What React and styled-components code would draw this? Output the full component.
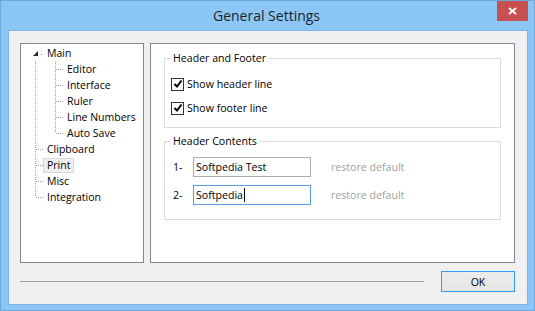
import React from "react";
import styled, { createGlobalStyle } from "styled-components";

const GlobalStyle = createGlobalStyle`
  html, body {
    margin: 0;
    padding: 0;
    background: #fff;
  }
  * {
    box-sizing: border-box;
  }
  body {
    font-family: "Open Sans", "Noto Sans", sans-serif;
    font-size: 10.5px;
    color: #000;
  }
`;

const tree = [
  {
    label: "Main",
    open: true,
    children: ["Editor", "Interface", "Ruler", "Line Numbers", "Auto Save"],
  },
  { label: "Clipboard" },
  { label: "Print", selected: true },
  { label: "Misc" },
  { label: "Integration" },
];

const Check = () => (
  <CheckBox>
    <svg width="10" height="10" viewBox="0 0 10 10">
      <path d="M1.5 5 L4 7.5 L8.5 1.5" stroke="#000" strokeWidth="2" fill="none" />
    </svg>
  </CheckBox>
);

export default function App() {
  return (
    <>
      <GlobalStyle />
      <Window>
        <TitleBar>
          <span />
          <Title>General Settings</Title>
          <CloseButton>
            <svg width="9" height="8" viewBox="0 0 9 8">
              <path d="M1 1 L8 7 M8 1 L1 7" stroke="#fff" strokeWidth="2" />
            </svg>
          </CloseButton>
        </TitleBar>

        <Content>
          <Main>
            <TreeBox>
              {tree.map((item, i) => {
                const lastTop = i === tree.length - 1;
                return (
                  <React.Fragment key={item.label}>
                    <TreeRow>
                      {item.open ? (
                        <Expander>
                          <svg width="13" height="16" viewBox="0 0 13 16">
                            <path d="M8 6 L8 11 L3 11 Z" fill="#262626" />
                            <rect x="11" y="9" width="1" height="1" fill="#8c8c8c" />
                          </svg>
                        </Expander>
                      ) : (
                        <Guide $w={13} $vert={lastTop ? "half" : "full"} $horiz />
                      )}
                      <Label $selected={item.selected}>{item.label}</Label>
                    </TreeRow>
                    {item.children &&
                      item.children.map((child, j) => (
                        <TreeRow key={child}>
                          <Guide $w={20} $vert="full" />
                          <Guide
                            $w={13}
                            $vert={j === item.children.length - 1 ? "half" : "full"}
                            $horiz
                          />
                          <Label>{child}</Label>
                        </TreeRow>
                      ))}
                  </React.Fragment>
                );
              })}
            </TreeBox>

            <Panel>
              <Group>
                <Legend>Header and Footer</Legend>
                <CheckList>
                  <CheckRow>
                    <Check />
                    Show header line
                  </CheckRow>
                  <CheckRow>
                    <Check />
                    Show footer line
                  </CheckRow>
                </CheckList>
              </Group>

              <Group $second>
                <Legend>Header Contents</Legend>
                <FieldList>
                  <FieldRow>
                    <Num>1-</Num>
                    <TextBox>Softpedia Test</TextBox>
                    <Restore>restore default</Restore>
                  </FieldRow>
                  <FieldRow>
                    <Num>2-</Num>
                    <TextBox $focused>
                      Softpedia<Caret />
                    </TextBox>
                    <Restore>restore default</Restore>
                  </FieldRow>
                </FieldList>
              </Group>
            </Panel>
          </Main>

          <Footer>
            <Separator />
            <OkButton>OK</OkButton>
          </Footer>
        </Content>
      </Window>
    </>
  );
}

const Window = styled.div`
  width: 535px;
  height: 311px;
  background: #8bc6f7;
  border: 1px solid #6ea7dc;
  display: flex;
  flex-direction: column;
`;

const TitleBar = styled.div`
  height: 29px;
  display: grid;
  grid-template-columns: 1fr auto 1fr;
  align-items: start;
  padding-right: 6px;
`;

const Title = styled.div`
  font-size: 14px;
  line-height: 29px;
  color: #1f1f1f;
  padding-left: 4px;
`;

const CloseButton = styled.div`
  justify-self: end;
  width: 31px;
  height: 20px;
  background: #c75050;
  display: flex;
  align-items: center;
  justify-content: center;
`;

const Content = styled.div`
  flex: 1;
  margin: 0 6px 5px 7px;
  background: #f0f0f0;
  border: 1px solid #7db3e6;
  padding: 12px 12px 0 11px;
  display: flex;
  flex-direction: column;
`;

const Main = styled.div`
  display: flex;
  gap: 6px;
  height: 220px;
`;

const TreeBox = styled.div`
  width: 124px;
  background: #fff;
  border: 1px solid #828790;
  padding: 1px 0 0 9px;
`;

const TreeRow = styled.div`
  display: flex;
  align-items: center;
  height: 16px;
`;

const Expander = styled.div`
  width: 13px;
  height: 16px;
  svg {
    display: block;
  }
`;

const dots = "repeating-linear-gradient(to bottom, #a0a0a0 0 1px, transparent 1px 2px)";
const hdots = "repeating-linear-gradient(to right, #a0a0a0 0 1px, transparent 1px 2px)";

const Guide = styled.div`
  width: ${(p) => p.$w}px;
  height: 16px;
  flex: none;
  background-image: ${(p) => (p.$vert !== "none" ? dots : "none")},
    ${(p) => (p.$horiz ? hdots : "none")};
  background-repeat: no-repeat;
  background-size: 1px ${(p) => (p.$vert === "half" ? "8px" : "16px")},
    ${(p) => p.$w - 6}px 1px;
  background-position: 5px 0, 6px 8px;
`;

const Label = styled.div`
  height: 15px;
  line-height: 13px;
  padding: 0 3px;
  border: 1px solid ${(p) => (p.$selected ? "#d9d9d9" : "transparent")};
  background: ${(p) => (p.$selected ? "#efefef" : "transparent")};
  white-space: nowrap;
  color: #000;
`;

const Panel = styled.div`
  width: 365px;
  background: #fff;
  border: 1px solid #828790;
  padding: 6px 13px 0 13px;
`;

const Group = styled.fieldset`
  margin: ${(p) => (p.$second ? "5px 0 0" : "0")};
  padding: ${(p) => (p.$second ? "8px 0 14px 0" : "10px 0 11px 0")};
  border: 1px solid #dcdcdc;
  min-width: 0;
`;

const Legend = styled.legend`
  margin-left: 5px;
  padding: 0 3px;
  line-height: 16px;
  height: 16px;
  font-size: 10.6px;
  color: #000;
`;

const CheckList = styled.div`
  display: flex;
  flex-direction: column;
  gap: 8px;
  padding-left: 5px;
`;

const CheckRow = styled.label`
  display: flex;
  align-items: center;
  gap: 3px;
  height: 16px;
  font-size: 10.6px;
`;

const CheckBox = styled.span`
  width: 13px;
  height: 13px;
  border: 1px solid #333;
  background: #fff;
  display: flex;
  align-items: center;
  justify-content: center;
  margin-left: 1px;
`;

const FieldList = styled.div`
  display: flex;
  flex-direction: column;
  gap: 8px;
  padding-left: 8px;
`;

const FieldRow = styled.div`
  display: flex;
  align-items: center;
  height: 20px;
  font-size: 10.6px;
`;

const Num = styled.span`
  width: 20px;
`;

const TextBox = styled.div`
  width: 118px;
  height: 20px;
  border: 1px solid ${(p) => (p.$focused ? "#569de5" : "#adadad")};
  background: #fff;
  padding: 0 2px;
  line-height: 18px;
  display: flex;
  align-items: center;
`;

const Caret = styled.span`
  width: 1px;
  height: 14px;
  background: #000;
  margin-left: 1px;
`;

const Restore = styled.span`
  margin-left: 20px;
  color: #a0a0a0;
`;

const Footer = styled.div`
  display: flex;
  align-items: center;
  gap: 17px;
  margin-top: 8px;
`;

const Separator = styled.div`
  flex: 1;
  height: 1px;
  background: #a0a0a0;
`;

const OkButton = styled.button`
  width: 74px;
  height: 21px;
  border: 1px solid #3399ff;
  background: linear-gradient(#ececec, #e4e4e4);
  font-family: "Open Sans", "Noto Sans", sans-serif;
  font-size: 10.6px;
  color: #000;
  padding: 0;
`;
